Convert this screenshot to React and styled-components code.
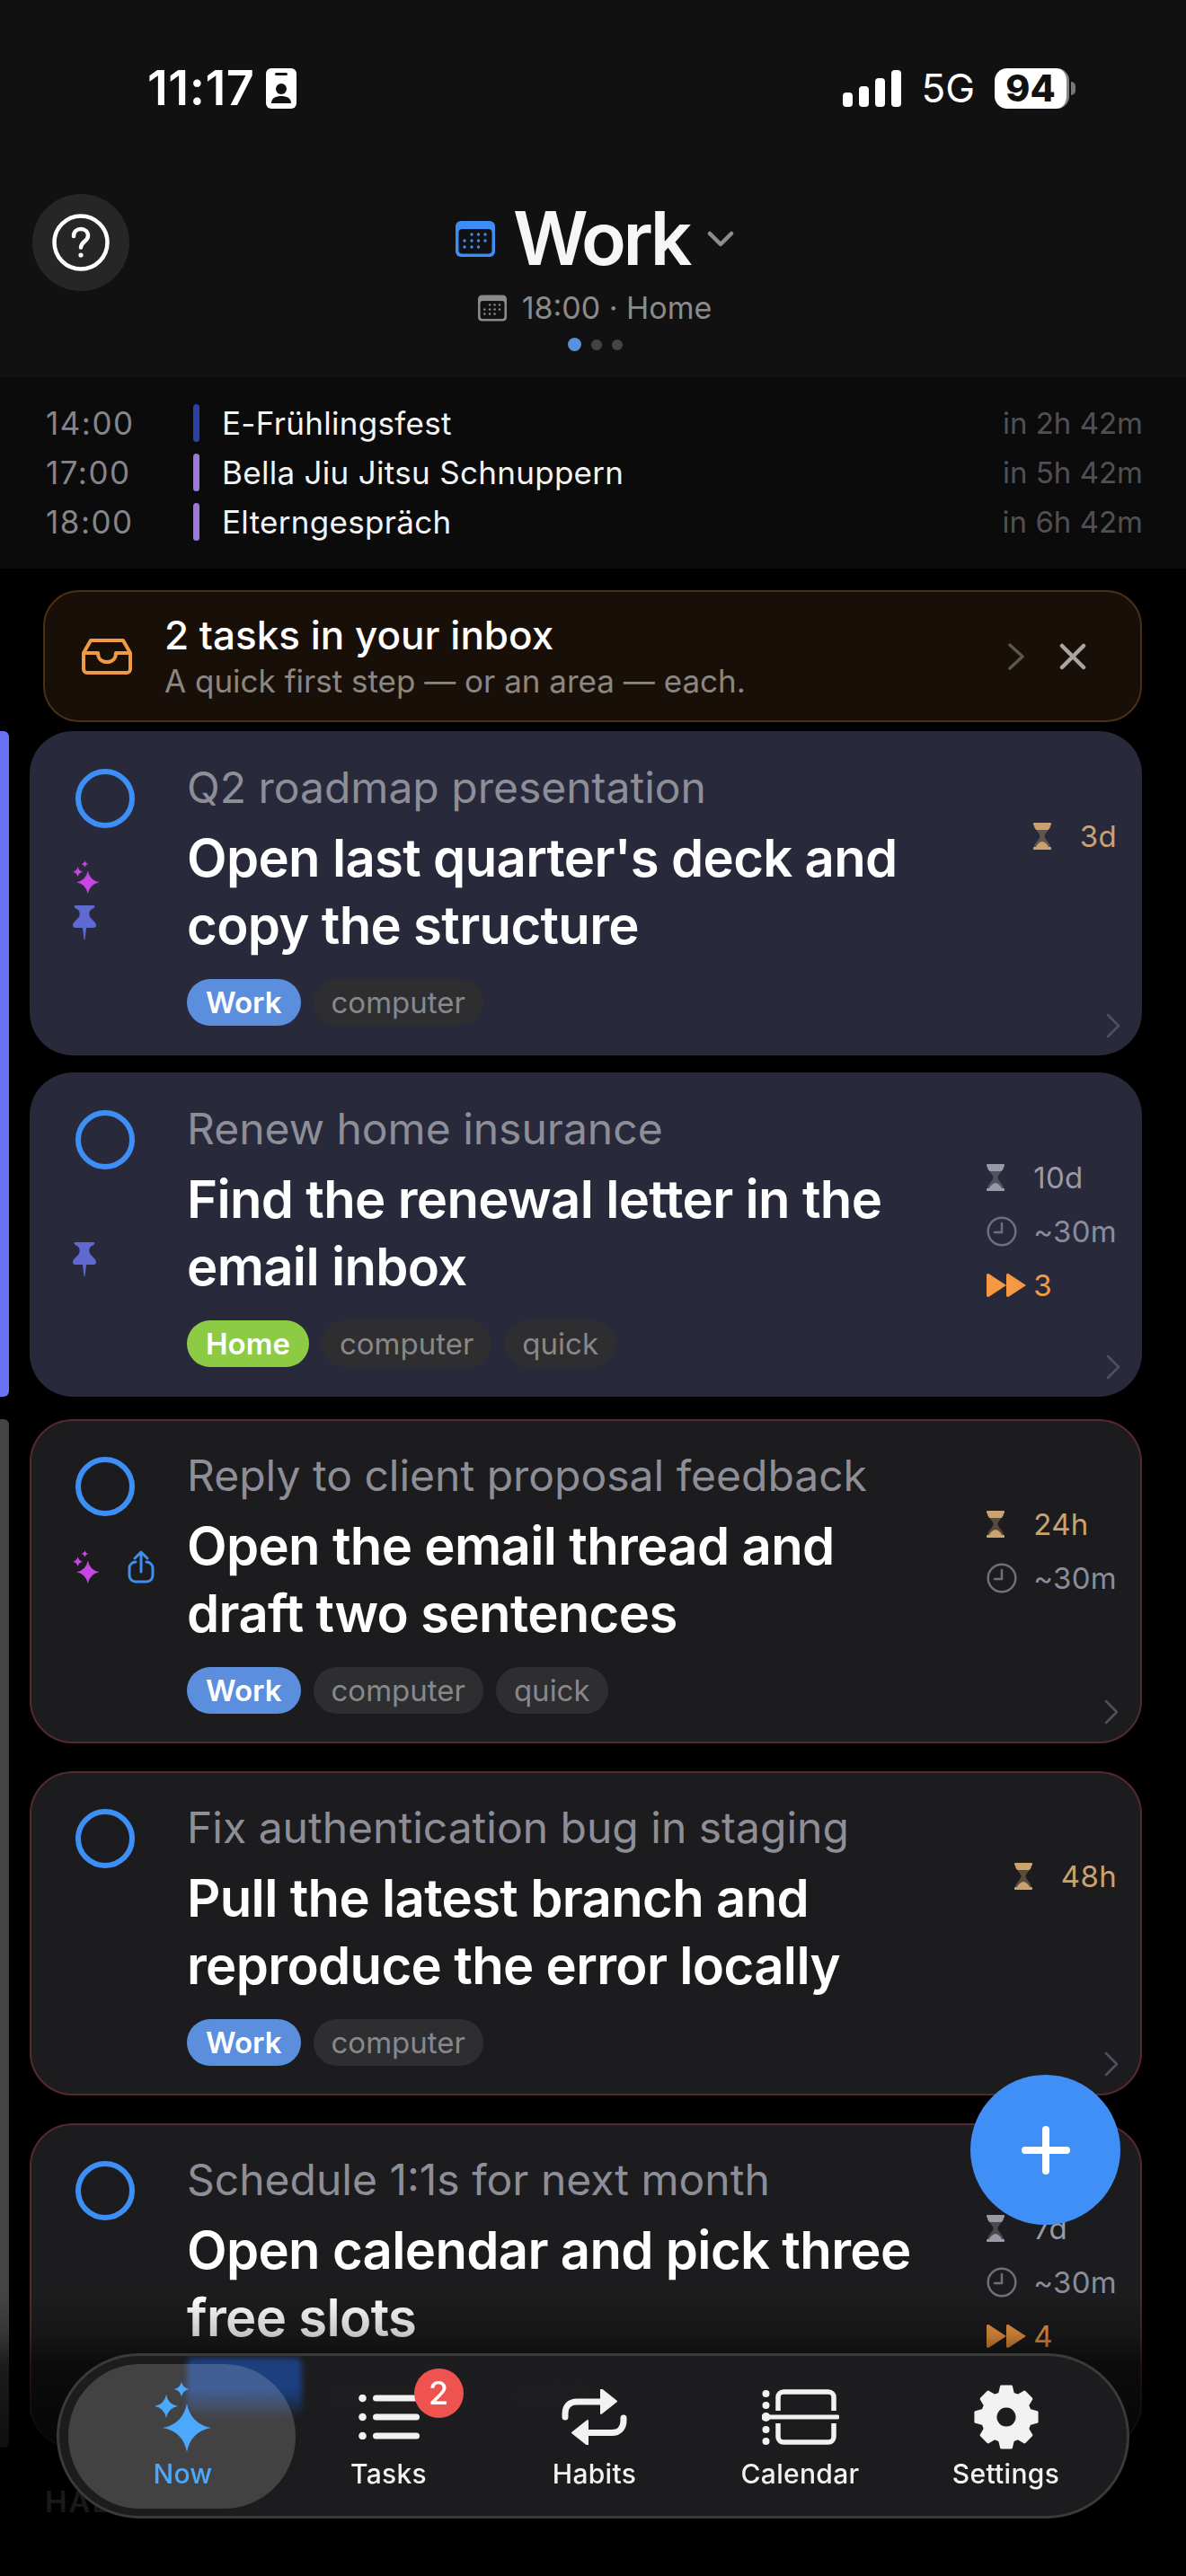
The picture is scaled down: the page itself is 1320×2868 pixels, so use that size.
import React from 'react';
import styled, { createGlobalStyle } from 'styled-components';

const GlobalStyle = createGlobalStyle`
    html, body {
        margin: 0;
        padding: 0;
        background: #000;
    }
    * {
        box-sizing: border-box;
    }
`

const Screen = styled.div`
    position: relative;
    width: 1320px;
    height: 2868px;
    overflow: hidden;
    background: #000;
    color: #fff;
    font-family: Inter, "Liberation Sans", sans-serif;
`
const Header = styled.header`
    height: 420px;
    background: #111112;
    display: flex;
    flex-direction: column;
`
const StatusBar = styled.div`
    height: 216px;
    padding: 75px 122px 0 164px;
    display: flex;
    justify-content: space-between;
    align-items: flex-start;
`
const StatusSide = styled.div`
    display: flex;
    align-items: center;
    gap: ${props => props.$gap}px;
    height: 46px;
`
const Clock = styled.span`
    font-size: 54px;
    font-weight: 600;
    letter-spacing: 0.5px;
    line-height: 46px;
`
const NetLabel = styled.span`
    font-size: 44px;
    font-weight: 400;
    line-height: 46px;
`
const Battery = styled.div`
    position: relative;
    width: 83px;
    height: 45px;
    border-radius: 14px;
    border-right: 3px solid #858585;
    background: #fff;
    color: #111;
    font-size: 41px;
    font-weight: 800;
    line-height: 45px;
    text-align: center;
    margin-right: 8px;
    &::after {
        content: '';
        position: absolute;
        left: 85px;
        top: 15px;
        width: 5px;
        height: 15px;
        border-radius: 0 6px 6px 0;
        background: #777;
    }
`
const TitleBar = styled.div`
    display: flex;
    padding-left: 36px;
`
const HelpButton = styled.div`
    width: 108px;
    height: 108px;
    border-radius: 50%;
    background: #262626;
    display: flex;
    align-items: center;
    justify-content: center;
`
const TitleBlock = styled.div`
    width: 1036px;
    display: flex;
    flex-direction: column;
    align-items: center;
    margin-top: 16px;
`
const TitleRow = styled.div`
    display: flex;
    align-items: center;
    gap: 20px;
    height: 68px;
`
const Title = styled.h1`
    margin: 0;
    font-size: 82px;
    font-weight: 600;
    line-height: 68px;
    letter-spacing: -3.5px;
    color: #f6f6f6;
`
const SubRow = styled.div`
    display: flex;
    align-items: center;
    gap: 17px;
    margin-top: 25px;
    font-size: 34px;
    line-height: 36px;
    color: #8b8b8b;
`
const Dots = styled.div`
    display: flex;
    align-items: center;
    gap: 11px;
    margin-top: 15px;
`
const Dot = styled.span`
    width: ${props => props.$active ? 15 : 12}px;
    height: ${props => props.$active ? 15 : 12}px;
    border-radius: 50%;
    background: ${props => props.$active ? '#5a8fdd' : '#444'};
`

const Events = styled.section`
    height: 213px;
    background: #0b0b0b;
    padding: 30px 48px 0 51px;
    display: flex;
    flex-direction: column;
    gap: 13px;
`
const EventRow = styled.div`
    height: 42px;
    display: flex;
    align-items: center;
    font-size: 35px;
`
const EventTime = styled.span`
    width: 164px;
    letter-spacing: 1.5px;
    color: #85858a;
`
const EventBar = styled.span`
    width: 7px;
    height: 42px;
    border-radius: 4px;
    margin-right: 25px;
    background: ${props => props.$color};
`
const EventName = styled.span`
    flex: 1;
    letter-spacing: 0.3px;
    color: #f4f4f4;
`
const EventLeft = styled.span`
    font-size: 33px;
    color: #505052;
`

const InboxBanner = styled.div`
    position: relative;
    height: 147px;
    margin: 24px 49px 10px 48px;
    padding-left: 41px;
    border: 2px solid #4a3116;
    border-radius: 40px;
    background: #181008;
    display: flex;
    align-items: center;
`
const InboxText = styled.div`
    flex: 1;
    margin-left: 36px;
`
const InboxTitle = styled.div`
    font-size: 44px;
    font-weight: 500;
    line-height: 52px;
`
const InboxSub = styled.div`
    margin-top: 3px;
    font-size: 35px;
    line-height: 44px;
    color: #8a8783;
`
const InboxActions = styled.div`
    display: flex;
    align-items: center;
    gap: 38px;
    padding-right: 60px;
`

const Group = styled.section`
    display: flex;
    margin-bottom: 25px;
`
const Rail = styled.div`
    width: 10px;
    flex: none;
    border-radius: 0 6px 6px 0;
    background: ${props => props.$color};
`
const CardStack = styled.div`
    margin-left: 23px;
    width: 1238px;
    display: flex;
    flex-direction: column;
    gap: ${props => props.$gap}px;
`
const Card = styled.article`
    position: relative;
    height: 361px;
    display: flex;
    border-radius: 48px;
    background: ${props => props.$focus ? '#282a3c' : '#1c1c1e'};
    border: ${props => props.$focus ? '0' : '2px solid #562a2c'};
    padding: ${props => props.$focus ? '42px 28px 0 51px' : '40px 26px 0 49px'};
`
const LeftCol = styled.div`
    width: 124px;
    flex: none;
`
const Check = styled.div`
    width: 66px;
    height: 66px;
    border-radius: 50%;
    border: 6px solid #3d8ff5;
`
const Marks = styled.div`
    display: flex;
    flex-direction: ${props => props.$row ? 'row' : 'column'};
    align-items: flex-start;
    gap: ${props => props.$row ? 31 : 13}px;
    margin: ${props => props.$top}px 0 0 -3px;
`
const Body = styled.div`
    flex: 1;
    min-width: 0;
    margin-top: -9px;
`
const Subject = styled.div`
    font-size: 48px;
    line-height: 60px;
    color: #8e8e98;
`
const Step = styled.div`
    margin-top: 11px;
    font-size: 58px;
    font-weight: 600;
    line-height: 75px;
    letter-spacing: -0.65px;
    white-space: pre-line;
    color: #fff;
`
const Tags = styled.div`
    display: flex;
    gap: 14px;
    margin-top: 22px;
`
const Tag = styled.span`
    height: 52px;
    padding: 0 ${props => props.$color ? 21 : 20}px;
    border-radius: 26px;
    font-size: 33px;
    line-height: 52px;
    font-weight: ${props => props.$color ? 600 : 400};
    background: ${props => props.$color || '#2e2e30'};
    color: ${props => props.$color ? '#fff' : '#88888a'};
`
const Meta = styled.div`
    flex: none;
    display: flex;
    flex-direction: column;
    margin-top: 45px;
`
const MetaRow = styled.div`
    height: 60px;
    display: flex;
    align-items: center;
    gap: ${props => props.$tight ? 8 : 0}px;
    font-size: 33px;
    letter-spacing: 0.3px;
    color: ${props => props.$color};
`
const MetaIcon = styled.span`
    width: 52px;
    display: flex;
`
const CardChevron = styled.svg`
    position: absolute;
    right: 24px;
    bottom: 19px;
`
const Section = styled.div`
    margin: 40px 0 0 50px;
    font-size: 33px;
    font-weight: 600;
    letter-spacing: 2px;
    color: #8a8a8a;
`

const BottomFade = styled.div`
    position: absolute;
    left: 0;
    right: 0;
    top: 2555px;
    height: 313px;
    background: linear-gradient(to bottom, rgba(0,0,0,0) 0%, rgba(0,0,0,0.22) 14%, rgba(0,0,0,0.6) 25%, rgba(0,0,0,0.8) 55%, rgba(0,0,0,0.85) 100%);
`
const Fab = styled.div`
    position: absolute;
    left: 1080px;
    top: 2310px;
    width: 167px;
    height: 167px;
    border-radius: 50%;
    background: #3f8ff7;
    display: flex;
    align-items: center;
    justify-content: center;
`
const TabBar = styled.nav`
    position: absolute;
    left: 63px;
    top: 2620px;
    width: 1194px;
    height: 184px;
    padding-left: 23px;
    border-radius: 92px;
    border: 3px solid #3a3a3b;
    background: rgba(31, 31, 33, 0.9);
    backdrop-filter: blur(6px);
    display: grid;
    grid-template-columns: repeat(5, 229px);
    overflow: hidden;
`
const TagGhost = styled.span`
    position: absolute;
    left: 142px;
    top: 2px;
    width: 128px;
    height: 66px;
    border-radius: 8px;
    background: linear-gradient(to bottom, #1c3f7e 55%, rgba(28, 63, 126, 0));
    filter: blur(3px);
`
const ActivePill = styled.span`
    position: absolute;
    left: 10px;
    top: 9px;
    width: 253px;
    height: 161px;
    border-radius: 80px;
    background: rgba(255, 255, 255, 0.17);
`
const TabItem = styled.div`
    position: relative;
    display: flex;
    flex-direction: column;
    align-items: center;
    color: ${props => props.$active ? '#4ba8fb' : '#f2f2f2'};
`
const TabIcon = styled.div`
    position: relative;
    width: 100px;
    height: 84px;
    margin-top: 26px;
    display: flex;
    align-items: center;
    justify-content: center;
`
const TabLabel = styled.span`
    margin-top: 3px;
    font-size: 30px;
    font-weight: 500;
    line-height: 36px;
    letter-spacing: 0.3px;
`
const TabBadge = styled.span`
    position: absolute;
    left: 78px;
    top: -12px;
    width: 55px;
    height: 55px;
    border-radius: 50%;
    background: #ef5350;
    color: #fff;
    font-size: 36px;
    font-weight: 500;
    line-height: 55px;
    text-align: center;
`

// four pointed star with concave sides
const star = (cx, cy, r) => {
    const k = r * 0.16
    return `M${cx} ${cy - r}Q${cx + k} ${cy - k} ${cx + r} ${cy}Q${cx + k} ${cy + k} ${cx} ${cy + r}Q${cx - k} ${cy + k} ${cx - r} ${cy}Q${cx - k} ${cy - k} ${cx} ${cy - r}Z`
}

const gearPath = () => {
    const teeth = 8
    const pts = []
    for (let i = 0; i < teeth; i++) {
        const a = -90 + i * 360 / teeth
        const add = (deg, r) => {
            const rad = (a + deg) * Math.PI / 180
            pts.push(`${(36 + r * Math.cos(rad)).toFixed(2)} ${(36 + r * Math.sin(rad)).toFixed(2)}`)
        }
        add(-16, 27)
        add(-9, 34.5)
        add(9, 34.5)
        add(16, 27)
    }
    return `M${pts.join('L')}Z M36 24a12 12 0 1 0 .01 0Z`
}

const Hourglass = ({ color }) => (
    <svg width="20" height="30" viewBox="0 0 20 30">
        <path d="M1 0h18v3c0 4-6 8-6.500 12 .5 4 6.500 8 6.500 12v3H1v-3c0-4 6-8 6.500-12C7 11 1 7 1 3z" fill={color} opacity="0.35" />
        <path d="M1 0h18v3c0 2-1 4-2.500 5h-13C2 7 1 5 1 3zM3 27c1-3 5-6 7-6s6 3 7 6v3H3z" fill={color} />
        <rect x="0" y="0" width="20" height="3" rx="1" fill={color} />
        <rect x="0" y="27" width="20" height="3" rx="1" fill={color} />
    </svg>
)
const ClockIcon = () => (
    <svg width="34" height="34" viewBox="0 0 34 34" fill="none" stroke="#6d6f7c" strokeWidth="2.5" strokeLinecap="round">
        <circle cx="17" cy="17" r="15.3" />
        <path d="M17 8v10H9" />
    </svg>
)
const FastForward = ({ color }) => (
    <svg width="44" height="26" viewBox="0 0 44 26" fill={color}>
        <path d="M0 2c0-2 1.500-2.500 3-1.500L22 13 3 25.500C1.500 26.500 0 26 0 24z" />
        <path d="M22 2c0-2 1.500-2.500 3-1.500L44 13 25 25.500C23.500 26.500 22 26 22 24z" />
    </svg>
)
const Sparkles = ({ color }) => (
    <svg width="30" height="37" viewBox="0 0 30 37" fill={color}>
        <path d={star(16.8, 24.2, 12.8)} />
        <path d={star(5.6, 12.7, 5.6)} />
        <path d={star(13.4, 3.9, 3.9)} />
    </svg>
)
const Pin = () => (
    <svg width="26" height="38" viewBox="0 0 26 38" fill="#5f69d2">
        <path d="M3 0h20c1.500 0 2 2-.5 3.500C19 5 18 7 18.500 11c.5 4 7.500 7 7.500 11 0 2-1 3-3 3H15l-1.500 13h-1L11 25H3c-2 0-3-1-3-3 0-4 7-7 7.500-11C8 7 7 5 3.500 3.500 1 2 1.500 0 3 0z" />
    </svg>
)
const ShareIcon = () => (
    <svg width="30" height="37" viewBox="0 0 30 37" fill="none" stroke="#3d8ff0" strokeWidth="3" strokeLinecap="round" strokeLinejoin="round">
        <path d="M9 13H9a7 7 0 0 0-7 7v8a7 7 0 0 0 7 7h12a7 7 0 0 0 7-7v-8a7 7 0 0 0-7-7" />
        <path d="M15 24V2M8 9l7-7 7 7" />
    </svg>
)
const Chevron = ({ color }) => (
    <svg width="20" height="30" viewBox="0 0 20 30" fill="none" stroke={color} strokeWidth="3.5" strokeLinecap="round" strokeLinejoin="round">
        <path d="M3 2l14 13L3 28" />
    </svg>
)
const calendarDots = [[18, 15], [25.5, 15], [33, 15], [10, 22], [18, 22], [25.5, 22], [33, 22], [10, 29], [18, 29], [25.5, 29]]
const CalendarGlyph = ({ color, w, h }) => (
    <svg width={w} height={h} viewBox="0 0 44 40">
        <rect x="0" y="0" width="44" height="40" rx="6" fill={color} />
        <rect x="3.5" y="9" width="37" height="27.5" rx="4" fill="#111112" />
        {calendarDots.map(([x, y]) => (
            <circle key={x + '-' + y} cx={x} cy={y} r="1.7" fill={color} />
        ))}
    </svg>
)

const ListIcon = () => (
    <svg width="68" height="50" viewBox="0 0 68 50" fill="#f2f2f2">
        {[4, 25, 46].map(y => (
            <g key={y}>
                <circle cx="4.5" cy={y} r="4.3" />
                <rect x="16" y={y - 3.5} width="52" height="7" rx="3.5" />
            </g>
        ))}
    </svg>
)
const RepeatIcon = () => (
    <svg width="73" height="62" viewBox="0 0 73 62" fill="none" stroke="#f2f2f2" strokeWidth="7" strokeLinecap="round">
        <path d="M4 31v-4c0-8 5-13 13-13h28" />
        <path d="M69 32v3c0 8-5 13.500-13 13.500H28" />
        <path d="M44 0l17 13.500L44 27z" fill="#f2f2f2" stroke="#f2f2f2" strokeWidth="2" strokeLinejoin="round" />
        <path d="M29 35L12 48.500 29 62z" fill="#f2f2f2" stroke="#f2f2f2" strokeWidth="2" strokeLinejoin="round" />
    </svg>
)
const SplitIcon = () => (
    <svg width="86" height="62" viewBox="0 0 86 62" fill="none" stroke="#f2f2f2" strokeWidth="5.5">
        <path d="M18 24V9a6 6 0 0 1 6-6h50a6 6 0 0 1 6 6v15" />
        <path d="M18 38v15a6 6 0 0 0 6 6h50a6 6 0 0 0 6-6V38" />
        <path d="M4 31h80" strokeLinecap="round" strokeWidth="5" />
        <g fill="#f2f2f2" stroke="none">
            <circle cx="4.5" cy="5" r="4" />
            <circle cx="4.5" cy="18" r="4" />
            <circle cx="4.5" cy="31" r="5" />
            <circle cx="4.5" cy="45" r="4" />
            <circle cx="4.5" cy="58" r="4" />
        </g>
    </svg>
)
const GearIcon = () => (
    <svg width="72" height="72" viewBox="0 0 72 72">
        <path d={gearPath()} fill="#f2f2f2" fillRule="evenodd" stroke="#f2f2f2" strokeWidth="3" strokeLinejoin="round" />
    </svg>
)

const cards = [
    {
        subject: 'Q2 roadmap presentation',
        step: "Open last quarter's deck and\ncopy the structure",
        area: 'Work',
        tags: ['computer'],
        focus: true,
        marks: 'stack',
        due: '3d',
        dueColor: '#c9a270',
    },
    {
        subject: 'Renew home insurance',
        step: 'Find the renewal letter in the\nemail inbox',
        area: 'Home',
        tags: ['computer', 'quick'],
        focus: true,
        marks: 'pin',
        due: '10d',
        dueColor: '#9a9aa6',
        time: '~30m',
        skip: 3,
    },
    {
        subject: 'Reply to client proposal feedback',
        step: 'Open the email thread and\ndraft two sentences',
        area: 'Work',
        tags: ['computer', 'quick'],
        marks: 'row',
        due: '24h',
        dueColor: '#c9a270',
        time: '~30m',
    },
    {
        subject: 'Fix authentication bug in staging',
        step: 'Pull the latest branch and\nreproduce the error locally',
        area: 'Work',
        tags: ['computer'],
        due: '48h',
        dueColor: '#c9a270',
    },
    {
        subject: 'Schedule 1:1s for next month',
        step: 'Open calendar and pick three\nfree slots',
        area: 'Work',
        tags: ['computer', 'quick'],
        due: '7d',
        dueColor: '#9a9aa6',
        time: '~30m',
        skip: 4,
    },
]

const areaColors = { Work: '#5b8fdd', Home: '#8dcb45' }

const TaskCard = ({ task }) => (
    <Card $focus={task.focus}>
        <LeftCol>
            <Check />
            {task.marks === 'stack' && (
                <Marks $top={36}>
                    <Sparkles color="#c645e4" />
                    <Pin />
                </Marks>
            )}
            {task.marks === 'pin' && (
                <Marks $top={81}>
                    <Pin />
                </Marks>
            )}
            {task.marks === 'row' && (
                <Marks $top={38} $row>
                    <Sparkles color="#c645e4" />
                    <ShareIcon />
                </Marks>
            )}
        </LeftCol>
        <Body>
            <Subject>{task.subject}</Subject>
            <Step>{task.step}</Step>
            <Tags>
                <Tag $color={areaColors[task.area]}>{task.area}</Tag>
                {task.tags.map(t => <Tag key={t}>{t}</Tag>)}
            </Tags>
        </Body>
        <Meta>
            <MetaRow $color={task.dueColor}>
                <MetaIcon><Hourglass color={task.dueColor} /></MetaIcon>
                {task.due}
            </MetaRow>
            {task.time && (
                <MetaRow $color="#8a8c98">
                    <MetaIcon><ClockIcon /></MetaIcon>
                    {task.time}
                </MetaRow>
            )}
            {task.skip && (
                <MetaRow $color="#f59a42" $tight>
                    <FastForward color="#f59a42" />
                    {task.skip}
                </MetaRow>
            )}
        </Meta>
        <CardChevron width="16" height="28" viewBox="0 0 16 28" fill="none" stroke="#4f5162" strokeWidth="2.5" strokeLinecap="round" strokeLinejoin="round">
            <path d="M2 2l12 12L2 26" />
        </CardChevron>
    </Card>
)

const App = () => {
    return (
        <Screen>
            <GlobalStyle />
            <Header>
                <StatusBar>
                    <StatusSide $gap={13}>
                        <Clock>11:17</Clock>
                        <svg width="34" height="45" viewBox="0 0 34 45">
                            <rect width="34" height="45" rx="6" fill="#fff" />
                            <rect x="10" y="5" width="14" height="3" rx="1.5" fill="#111" />
                            <circle cx="17" cy="23" r="6" fill="#111" />
                            <path d="M6 39c0-6 5-8 11-8s11 2 11 8z" fill="#111" />
                        </svg>
                    </StatusSide>
                    <StatusSide $gap={22}>
                        <svg width="65" height="41" viewBox="0 0 65 41" fill="#fff">
                            <rect x="0" y="25" width="11" height="16" rx="4" />
                            <rect x="18" y="18" width="11" height="23" rx="4" />
                            <rect x="36" y="9" width="11" height="32" rx="4" />
                            <rect x="54" y="0" width="11" height="41" rx="4" />
                        </svg>
                        <NetLabel>5G</NetLabel>
                        <Battery>94</Battery>
                    </StatusSide>
                </StatusBar>
                <TitleBar>
                    <HelpButton>
                        <svg width="64" height="64" viewBox="0 0 64 64" fill="none" stroke="#fff" strokeWidth="4.5" strokeLinecap="round">
                            <circle cx="32" cy="32" r="29.5" />
                            <path d="M24 25c0-5 3.500-8 8-8s8 3 8 7.500c0 6-8 6.500-8 13" />
                            <circle cx="32" cy="46" r="1.6" fill="#fff" strokeWidth="2" />
                        </svg>
                    </HelpButton>
                    <TitleBlock>
                        <TitleRow>
                            <CalendarGlyph color="#3e8df5" w={44} h={40} />
                            <Title>Work</Title>
                            <svg width="30" height="18" viewBox="0 0 30 18" fill="none" stroke="#8d8d8d" strokeWidth="4.5" strokeLinecap="round" strokeLinejoin="round">
                                <path d="M3 3l12 12L27 3" />
                            </svg>
                        </TitleRow>
                        <SubRow>
                            <CalendarGlyph color="#8b8b8b" w={32} h={30} />
                            18:00 · Home
                        </SubRow>
                        <Dots>
                            <Dot $active />
                            <Dot />
                            <Dot />
                        </Dots>
                    </TitleBlock>
                </TitleBar>
            </Header>

            <Events>
                <EventRow>
                    <EventTime>14:00</EventTime>
                    <EventBar $color="#2c40a8" />
                    <EventName>E-Frühlingsfest</EventName>
                    <EventLeft>in 2h 42m</EventLeft>
                </EventRow>
                <EventRow>
                    <EventTime>17:00</EventTime>
                    <EventBar $color="#9a78dc" />
                    <EventName>Bella Jiu Jitsu Schnuppern</EventName>
                    <EventLeft>in 5h 42m</EventLeft>
                </EventRow>
                <EventRow>
                    <EventTime>18:00</EventTime>
                    <EventBar $color="#9a78dc" />
                    <EventName>Elterngespräch</EventName>
                    <EventLeft>in 6h 42m</EventLeft>
                </EventRow>
            </Events>

            <InboxBanner>
                <svg width="56" height="40" viewBox="0 0 56 40" fill="none" stroke="#f09a45" strokeWidth="4" strokeLinejoin="round">
                    <path d="M2 16L10 2h36l8 14v18a4 4 0 0 1-4 4H6a4 4 0 0 1-4-4z" />
                    <path d="M2 16h16c0 6 4 10 10 10s10-4 10-10h16" />
                </svg>
                <InboxText>
                    <InboxTitle>2 tasks in your inbox</InboxTitle>
                    <InboxSub>A quick first step — or an area — each.</InboxSub>
                </InboxText>
                <InboxActions>
                    <Chevron color="#5a5650" />
                    <svg width="30" height="30" viewBox="0 0 30 30" fill="none" stroke="#a8a6a2" strokeWidth="4.5" strokeLinecap="round">
                        <path d="M3 3l24 24M27 3L3 27" />
                    </svg>
                </InboxActions>
            </InboxBanner>

            <Group>
                <Rail $color="#6b72f5" />
                <CardStack $gap={19}>
                    <TaskCard task={cards[0]} />
                    <TaskCard task={cards[1]} />
                </CardStack>
            </Group>
            <Group>
                <Rail $color="#444446" />
                <CardStack $gap={31}>
                    <TaskCard task={cards[2]} />
                    <TaskCard task={cards[3]} />
                    <TaskCard task={cards[4]} />
                </CardStack>
            </Group>
            <Section>HABITS</Section>

            <BottomFade />

            <Fab>
                <svg width="54" height="54" viewBox="0 0 54 54" stroke="#fff" strokeWidth="8" strokeLinecap="round">
                    <path d="M27 4v46M4 27h46" />
                </svg>
            </Fab>

            <TabBar>
                <TagGhost />
                <ActivePill />
                <TabItem $active>
                    <TabIcon>
                        <svg width="63" height="78" viewBox="0 0 63 78" fill="#4ba8fb">
                            <path d={star(36, 51, 27)} />
                            <path d={star(13, 27, 13)} />
                            <path d={star(30, 8, 8.5)} />
                        </svg>
                    </TabIcon>
                    <TabLabel>Now</TabLabel>
                </TabItem>
                <TabItem>
                    <TabIcon>
                        <ListIcon />
                        <TabBadge>2</TabBadge>
                    </TabIcon>
                    <TabLabel>Tasks</TabLabel>
                </TabItem>
                <TabItem>
                    <TabIcon><RepeatIcon /></TabIcon>
                    <TabLabel>Habits</TabLabel>
                </TabItem>
                <TabItem>
                    <TabIcon><SplitIcon /></TabIcon>
                    <TabLabel>Calendar</TabLabel>
                </TabItem>
                <TabItem>
                    <TabIcon><GearIcon /></TabIcon>
                    <TabLabel>Settings</TabLabel>
                </TabItem>
            </TabBar>
        </Screen>
    )
};

export default App;
